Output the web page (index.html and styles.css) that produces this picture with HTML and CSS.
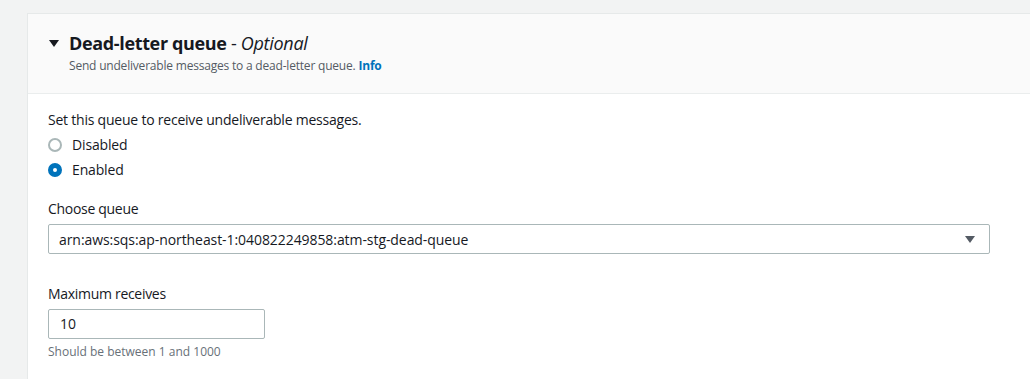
FILE: index.html
```html
<!DOCTYPE html>
<html>
<head>
<meta charset="utf-8">
<link rel="stylesheet" href="styles.css">
</head>
<body>
<section class="panel">
  <header class="panel-header">
    <div class="title-row">
      <span class="caret"></span>
      <h2 class="title">Dead-letter queue <span class="optional">- <i>Optional</i></span></h2>
    </div>
    <p class="desc">Send undeliverable messages to a dead-letter queue. <a class="info">Info</a></p>
  </header>
  <div class="panel-body">
    <p class="lead">Set this queue to receive undeliverable messages.</p>
    <div class="radios">
      <label class="radio"><span class="dot"></span>Disabled</label>
      <label class="radio"><span class="dot on"></span>Enabled</label>
    </div>
    <div class="field first">
      <div class="label">Choose queue</div>
      <div class="select">
        <span>arn:aws:sqs:ap-northeast-1:040822249858:atm-stg-dead-queue</span>
        <span class="arrow"></span>
      </div>
    </div>
    <div class="field second">
      <div class="label">Maximum receives</div>
      <div class="input">10</div>
      <div class="hint">Should be between 1 and 1000</div>
    </div>
  </div>
</section>
</body>
</html>
```
FILE: styles.css
```css
html, body { margin: 0; padding: 0; }
body {
  background: #f2f3f3;
  font-family: "Open Sans", "Liberation Sans", sans-serif;
  color: #16191f;
  padding: 13px 0 0 27px;
  height: 379px;
  box-sizing: border-box;
  overflow: hidden;
}
.panel {
  background: #fff;
  border: 1px solid #e6e9e9;
  border-right: none;
  height: 380px;
}
.panel-header {
  background: #fafafa;
  border-bottom: 1px solid #eaeded;
  padding: 16px 20px 0 21px;
  box-sizing: border-box;
  height: 80px;
}
.title-row { display: flex; align-items: center; }
.caret {
  width: 0; height: 0;
  border-left: 5px solid transparent;
  border-right: 5px solid transparent;
  border-top: 7px solid #16191f;
  margin-right: 10px;
}
.title {
  margin: 0;
  font-size: 18px;
  font-weight: 700;
  line-height: 26px;
  letter-spacing: -0.35px;
}
.optional { font-weight: 400; letter-spacing: -0.3px; }
.desc {
  margin: 2px 0 0 20px;
  font-size: 12px;
  color: #545b64;
  line-height: 16px;
  letter-spacing: -0.2px;
}
.info { color: #0073bb; font-weight: 700; }
.panel-body { padding: 16px 20px; }
.lead { margin: 0; font-size: 14px; line-height: 20px; letter-spacing: -0.22px; }
.radios { display: flex; flex-direction: column; gap: 5px; margin-top: 5px; }
.radio { display: flex; align-items: center; font-size: 14px; line-height: 20px; letter-spacing: -0.15px; }
.dot {
  width: 10px; height: 10px;
  border: 2px solid #aab7b8;
  border-radius: 50%;
  margin-right: 10px;
  box-sizing: content-box;
}
.dot.on {
  width: 4px; height: 4px;
  border: 5px solid #0073bb;
}
.field.first { margin-top: 19px; }
.field.second { margin-top: 30px; }
.label { font-size: 14px; line-height: 20px; margin-bottom: 5px; letter-spacing: -0.3px; }
.select {
  width: 942px;
  height: 30px;
  box-sizing: border-box;
  border: 1px solid #aab7b8;
  border-radius: 2px;
  display: flex;
  align-items: center;
  justify-content: space-between;
  padding: 0 14px 0 10px;
  font-size: 14px;
  letter-spacing: -0.07px;
}
.arrow {
  width: 0; height: 0;
  border-left: 5px solid transparent;
  border-right: 5px solid transparent;
  border-top: 7px solid #545b64;
}
.input {
  width: 217px;
  height: 30px;
  box-sizing: border-box;
  border: 1px solid #aab7b8;
  border-radius: 2px;
  padding: 0 11px;
  font-size: 14px;
  line-height: 28px;
}
.hint { font-size: 12px; color: #687078; margin-top: 5px; line-height: 16px; }
```
